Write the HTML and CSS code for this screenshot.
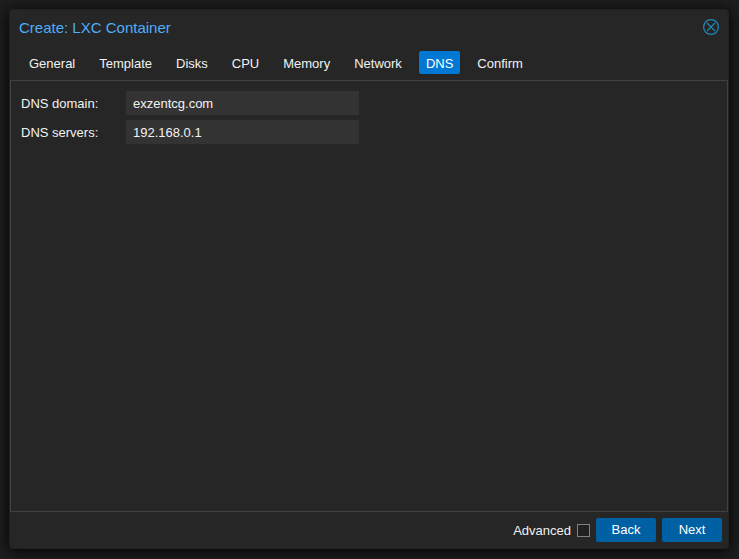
FILE: index.html
```html
<!DOCTYPE html>
<html lang="en">
<head>
<meta charset="utf-8">
<title>Create: LXC Container</title>
<link rel="stylesheet" href="styles.css">
</head>
<body>
<form class="window" role="dialog" aria-labelledby="title">
  <header class="header">
    <h1 class="title" id="title">Create: LXC Container</h1>
    <button class="close" type="button" aria-label="Close">
      <svg viewBox="0 0 16 16" width="16" height="16" fill="none" stroke="currentColor">
        <circle cx="8" cy="8" r="7.4" stroke-width="1.2"/>
        <path d="M4 4l8 8M12 4l-8 8" stroke-width="1.1"/>
      </svg>
    </button>
  </header>
  <nav class="tabs">
    <button class="tab" type="button">General</button>
    <button class="tab" type="button">Template</button>
    <button class="tab" type="button">Disks</button>
    <button class="tab" type="button">CPU</button>
    <button class="tab" type="button">Memory</button>
    <button class="tab" type="button">Network</button>
    <button class="tab active" type="button">DNS</button>
    <button class="tab" type="button">Confirm</button>
  </nav>
  <main class="panel">
    <div class="field">
      <label for="domain">DNS domain:</label>
      <input class="text" id="domain" type="text" value="exzentcg.com">
    </div>
    <div class="field">
      <label for="servers">DNS servers:</label>
      <input class="text" id="servers" type="text" value="192.168.0.1">
    </div>
  </main>
  <footer class="footer">
    <label class="advanced" for="advanced">Advanced</label>
    <input class="check" id="advanced" type="checkbox">
    <button class="action" type="button">Back</button>
    <button class="action" type="button">Next</button>
  </footer>
</form>
</body>
</html>
```
FILE: styles.css
```css
* {
  box-sizing: border-box;
}

body {
  margin: 0;
  height: 100vh;
  padding: 9px 10px 10px 9px;
  background: #1e1e1e;
  color: #f2f2f2;
  font: 13px/17px "Liberation Sans", Arial, sans-serif;
}

button,
input {
  margin: 0;
  font: inherit;
  color: inherit;
}

.window {
  display: flex;
  flex-direction: column;
  height: 100%;
  border: 1px solid #222;
  border-radius: 4px;
  background: #262626;
  box-shadow: 0 2px 15px #000;
}

.header {
  display: flex;
  align-items: flex-start;
  justify-content: space-between;
  height: 35px;
  padding: 9px 9px 0;
}

.title {
  margin: 0;
  font-size: 15px;
  font-weight: 400;
  color: #4daefa;
}

.close {
  display: flex;
  padding: 0;
  border: 0;
  background: none;
  color: #2389b8;
}

.tabs {
  display: flex;
  gap: 10px;
  padding: 6px 12px;
}

.tab {
  height: 23px;
  padding: 1px 7px 0;
  border: 0;
  border-radius: 2px;
  background: none;
}

.tab.active {
  background: #0078d4;
  color: #fff;
}

.panel {
  flex: 1;
  display: flex;
  flex-direction: column;
  gap: 5px;
  padding: 10px;
  border: 1px solid #414141;
}

.field {
  display: grid;
  grid-template-columns: 105px 233px;
  align-items: center;
}

.text {
  height: 24px;
  padding: 1px 7px 0;
  border: 0;
  background: #333;
}

.footer {
  display: flex;
  align-items: center;
  justify-content: flex-end;
  gap: 6px;
  padding: 6px;
}

.check {
  appearance: none;
  width: 13px;
  height: 13px;
  border: 1px solid #808080;
  background: #202020;
}

.action {
  width: 60px;
  height: 24px;
  padding: 0 0 1px;
  border: 0;
  border-radius: 2px;
  background: #0060a4;
  color: #fff;
}
```
